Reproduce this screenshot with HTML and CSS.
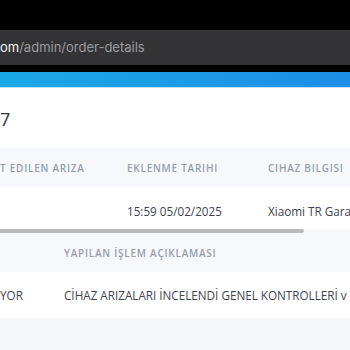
FILE: index.html
```html
<!DOCTYPE html>
<html lang="tr">
<head>
  <meta charset="UTF-8" />
  <meta name="viewport" content="width=device-width, initial-scale=1.0" />
  <title>Sipariş Detayı</title>
  <link rel="stylesheet" href="styles.css">
</head>
<body>
  <div class="chrome">
    <div class="urlbar"><span class="host">om</span>/admin/order-details</div>
  </div>
  <div class="topbar"></div>

  <div class="content">
    <h2 class="title">7</h2>

    <div class="table t1">
      <div class="row head">
        <div class="cell c1">T EDILEN ARIZA</div>
        <div class="cell c2">EKLENME TARIHI</div>
        <div class="cell c3">CIHAZ BILGISI</div>
      </div>
      <div class="row">
        <div class="cell c1"></div>
        <div class="cell c2">15:59 05/02/2025</div>
        <div class="cell c3">Xiaomi TR Gara</div>
      </div>
    </div>
    <div class="scroll"><div class="thumb"></div></div>

    <div class="table t2">
      <div class="row head">
        <div class="cell d1"></div>
        <div class="cell d2">YAPILAN İŞLEM AÇIKLAMASI</div>
      </div>
      <div class="row">
        <div class="cell d1">YOR</div>
        <div class="cell d2">CİHAZ ARIZALARI İNCELENDİ GENEL KONTROLLERİ v</div>
      </div>
    </div>
  </div>
</body>
</html>
```

FILE: styles.css
```css
* { box-sizing: border-box; margin: 0; padding: 0; }
body { background: #f4f6fa; font-family: "Open Sans", "Noto Sans", sans-serif; overflow: hidden; width: 350px; height: 350px; }

.chrome { background: #000; padding: 30px 0 7px; }
.urlbar { background: #333335; height: 35px; line-height: 35px; color: #9b9b9e; font-family: "Inter", "Open Sans", sans-serif; font-size: 13px; white-space: nowrap; }
.urlbar .host { color: #f2f2f2; }
.topbar { height: 16px; background: linear-gradient(90deg, #1aa8e8, #1d8ee6); border-bottom: 1px solid #bfe3f7; }

.content { background: #fff; }
.title { height: 60px; padding-top: 19px; font-size: 18px; font-weight: 400; color: #2d3340; line-height: 24px; }

.row { display: flex; white-space: nowrap; font-size: 11.7px; color: #3e4350; background: #fff; }
.row.head { background: #f6f8fb; font-size: 10px; font-weight: 600; letter-spacing: 0.75px; color: #979eab; }
.cell { flex-shrink: 0; }

.t1 .head { height: 39px; align-items: center; }
.t1 .row:not(.head) { height: 42px; align-items: center; padding-top: 6px; }
.c1 { width: 127px; }
.c2 { width: 141px; }
.c3 { flex: 1; min-width: 0; }

.scroll { height: 5px; background: #f7f8fa; }
.thumb { width: 304px; height: 4px; background: #b9b9bb; border-radius: 0 2px 2px 0; }

.t2 .head { height: 38px; align-items: center; }
.t2 .row:not(.head) { height: 46px; align-items: center; }
.d1 { width: 64px; }
.d2 { flex: 1; min-width: 0; }
```
